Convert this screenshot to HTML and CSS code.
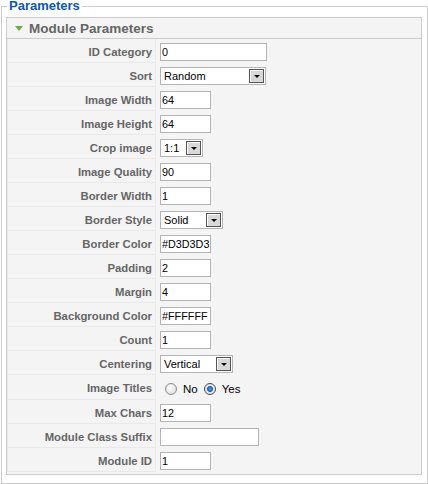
FILE: index.html
```html
<!DOCTYPE html>
<html lang="en">
<head>
  <meta charset="UTF-8">
  <title>Module Parameters</title>
  <link rel="stylesheet" href="styles.css">
</head>
<body>

  <fieldset class="adminform">
    <legend>Parameters</legend>

    <div class="panel">
      <h3 class="panel-title"><span class="arrow"></span>Module Parameters</h3>

      <table class="paramlist">
        <tr>
          <td class="key">ID Category</td>
          <td class="value"><input type="text" class="text w106" value="0"></td>
        </tr>
        <tr>
          <td class="key">Sort</td>
          <td class="value">
            <span class="select w106"><select><option>Random</option></select></span>
          </td>
        </tr>
        <tr>
          <td class="key">Image Width</td>
          <td class="value"><input type="text" class="text w51" value="64"></td>
        </tr>
        <tr>
          <td class="key">Image Height</td>
          <td class="value"><input type="text" class="text w51" value="64"></td>
        </tr>
        <tr>
          <td class="key">Crop image</td>
          <td class="value">
            <span class="select w43"><select><option>1:1</option></select></span>
          </td>
        </tr>
        <tr>
          <td class="key">Image Quality</td>
          <td class="value"><input type="text" class="text w51" value="90"></td>
        </tr>
        <tr>
          <td class="key">Border Width</td>
          <td class="value"><input type="text" class="text w51" value="1"></td>
        </tr>
        <tr>
          <td class="key">Border Style</td>
          <td class="value">
            <span class="select w63"><select><option>Solid</option></select></span>
          </td>
        </tr>
        <tr>
          <td class="key">Border Color</td>
          <td class="value"><input type="text" class="text w51" value="#D3D3D3"></td>
        </tr>
        <tr>
          <td class="key">Padding</td>
          <td class="value"><input type="text" class="text w51" value="2"></td>
        </tr>
        <tr>
          <td class="key">Margin</td>
          <td class="value"><input type="text" class="text w51" value="4"></td>
        </tr>
        <tr>
          <td class="key">Background Color</td>
          <td class="value"><input type="text" class="text w51" value="#FFFFFF"></td>
        </tr>
        <tr>
          <td class="key">Count</td>
          <td class="value"><input type="text" class="text w51" value="1"></td>
        </tr>
        <tr>
          <td class="key">Centering</td>
          <td class="value">
            <span class="select w73"><select><option>Vertical</option></select></span>
          </td>
        </tr>
        <tr class="tall">
          <td class="key">Image Titles</td>
          <td class="value">
            <span class="radios">
              <label class="radio"><input type="radio" name="titles">No</label>
              <label class="radio"><input type="radio" name="titles" checked>Yes</label>
            </span>
          </td>
        </tr>
        <tr>
          <td class="key">Max Chars</td>
          <td class="value"><input type="text" class="text w51" value="12"></td>
        </tr>
        <tr>
          <td class="key">Module Class Suffix</td>
          <td class="value"><input type="text" class="text w99" value=""></td>
        </tr>
        <tr>
          <td class="key">Module ID</td>
          <td class="value"><input type="text" class="text w51" value="1"></td>
        </tr>
      </table>
    </div>
  </fieldset>

</body>
</html>
```

FILE: styles.css
```css
body {
  margin: 0;
  background: #fff;
  font-family: "Liberation Sans", Arial, sans-serif;
  font-size: 11px;
  color: #333;
}

fieldset.adminform {
  margin: 0 0 0 1px;
  padding: 5px 5px 5px 4px;
  border: 1px solid #ccc;
  width: 416px;
}

fieldset.adminform legend {
  color: #0b55c4;
  font-size: 13px;
  font-weight: bold;
  padding: 0 2px;
  margin-left: 1px;
  line-height: 12px;
}

.panel {
  border: 1px solid #ccc;
  background: #f4f4f4;
  margin-bottom: 3px;
  padding-bottom: 2px;
}

.panel-title {
  margin: 0;
  height: 20px;
  line-height: 21px;
  padding-left: 8px;
  font-size: 13.5px;
  font-weight: bold;
  color: #666;
  background: #f4f4f4;
  border-bottom: 1px solid #ccc;
}

.arrow {
  display: inline-block;
  width: 0;
  height: 0;
  border-left: 4px solid transparent;
  border-right: 4px solid transparent;
  border-top: 5px solid #6dab47;
  margin-right: 6px;
  vertical-align: 2px;
}

table.paramlist {
  border-collapse: collapse;
  width: 100%;
}

table.paramlist td {
  padding: 2px 0 0 0;
  height: 21px;
}

table.paramlist tr.tall td {
  height: 22px;
}

td.key {
  width: 144px;
  text-align: right;
  font-size: 11.3px;
  font-weight: bold;
  color: #666;
  padding-right: 3px !important;
  border-bottom: 1px solid #e9e9e9;
  border-right: 1px solid #e9e9e9;
  border-left: 1px solid #e9e9e9;
}

td.value {
  padding-left: 4px !important;
}

input.text {
  box-sizing: border-box;
  height: 18px;
  margin: 0;
  padding: 1px 0 1px 1px;
  border: 1px solid #b5b5b5;
  background: #fff;
  font-family: "Liberation Sans", Arial, sans-serif;
  font-size: 10.8px;
  color: #000;
  vertical-align: middle;
}

.w51 { width: 51px; }
.w99 { width: 99px; }
.w106 { width: 107px; }

.select {
  display: inline-block;
  position: relative;
  box-sizing: border-box;
  height: 18px;
  border: 1px solid #b5b5b5;
  background: #fff;
  vertical-align: middle;
}

.select.w106 { width: 106px; }
.select.w43 { width: 43px; }
.select.w63 { width: 63px; }
.select.w73 { width: 73px; }

.select select {
  appearance: none;
  -webkit-appearance: none;
  border: none;
  background: transparent;
  width: 100%;
  height: 16px;
  padding: 0 0 0 3px;
  margin: 0;
  font-family: "Liberation Sans", Arial, sans-serif;
  font-size: 11px;
  color: #000;
  outline: none;
}

/* dropdown button */
.select::after {
  content: "";
  position: absolute;
  top: 1px;
  right: 1px;
  width: 13px;
  height: 12px;
  border: 1px solid #555;
  box-shadow: inset 1px 1px 0 #fff;
  background: #d8d8d8;
  pointer-events: none;
}

.select::before {
  content: "";
  position: absolute;
  z-index: 1;
  top: 7px;
  right: 5px;
  border-left: 3px solid transparent;
  border-right: 3px solid transparent;
  border-top: 3px solid #000;
  pointer-events: none;
}

.radios {
  display: flex;
  align-items: center;
  padding-left: 5px;
  padding-top: 1px;
}

label.radio {
  display: flex;
  align-items: center;
  margin-right: 6px;
  font-size: 11.5px;
  color: #000;
}

label.radio input {
  appearance: none;
  -webkit-appearance: none;
  box-sizing: border-box;
  width: 12px;
  height: 12px;
  margin: 0 6px 0 0;
  border: 1px solid #8c8c8c;
  border-radius: 50%;
  background: radial-gradient(circle at 40% 40%, #fff 0, #e2e2e2 70%, #cfcfcf 100%);
}

label.radio input:checked {
  background: radial-gradient(circle, #4fa0e8 0, #1f5fae 2.5px, #dfe6ee 3.5px, #f4f4f4 100%);
  border-color: #4a4a4a;
}
```
